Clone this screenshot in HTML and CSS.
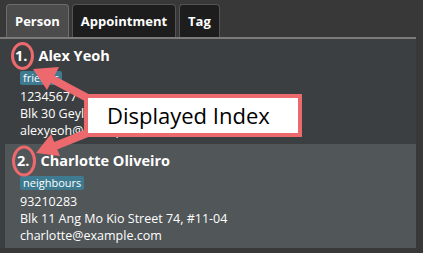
FILE: index.html
```html
<!DOCTYPE html>
<html lang="en">
<head>
    <meta charset="UTF-8">
    <meta name="viewport" content="width=device-width, initial-scale=1.0">
    <title>Person List - Displayed Index</title>
    <link rel="stylesheet" href="styles.css">
</head>
<body>
    <!-- Tab bar -->
    <div class="tabs">
        <div class="tab selected">Person</div>
        <div class="tab">Appointment</div>
        <div class="tab">Tag</div>
    </div>
    <div class="tab-line"></div>

    <!-- Person list -->
    <div class="list">
        <div class="card">
            <div class="name-row"><span class="index">1.</span><span class="name">Alex Yeoh</span></div>
            <div class="tags"><span class="tag">friends</span></div>
            <div class="detail">12345677</div>
            <div class="detail">Blk 30 Geylang Street 29, #06-40</div>
            <div class="detail">alexyeoh@example.com</div>
        </div>
        <div class="card alt">
            <div class="name-row"><span class="index">2.</span><span class="name">Charlotte Oliveiro</span></div>
            <div class="tags"><span class="tag">neighbours</span></div>
            <div class="detail">93210283</div>
            <div class="detail">Blk 11 Ang Mo Kio Street 74, #11-04</div>
            <div class="detail">charlotte@example.com</div>
        </div>
    </div>

    <!-- Annotation overlay -->
    <svg class="marks" width="423" height="253" viewBox="0 0 423 253">
        <ellipse cx="22.5" cy="56" rx="10" ry="12.5" />
        <ellipse cx="24" cy="161" rx="10.5" ry="14" />
        <line x1="95" y1="102" x2="52" y2="79" />
        <polygon points="33,69 59,67 47,90" />
        <line x1="95" y1="130" x2="55" y2="146" />
        <polygon points="36,153 51,134 60,156" />
    </svg>
    <div class="callout">Displayed Index</div>
</body>
</html>
```
FILE: styles.css
```css
body {
    margin: 0;
    width: 423px;
    height: 253px;
    overflow: hidden;
    background-color: #383838;
    font-family: "Open Sans", "Noto Sans", sans-serif;
    color: #fff;
    position: relative;
}

.tabs {
    display: flex;
    gap: 3px;
    padding: 4px 0 0 6px;
    height: 37px;
    box-sizing: border-box;
}

.tab {
    height: 33px;
    box-sizing: border-box;
    padding: 5px 8px 0 8px;
    font-size: 13px;
    font-weight: 700;
    line-height: 22px;
    background-color: #1d1d1d;
    border: 1px solid #545454;
    border-bottom: none;
    border-radius: 4px 4px 0 0;
}

.tab.selected {
    background-color: #4c4c4c;
    border-color: #6c6c6c;
}

.tab-line {
    width: 416px;
    height: 2px;
    background-color: #7b7b7b;
}

.list {
    width: 416px;
    height: 209px;
    background-color: #3c3f41;
}

.card {
    height: 105px;
    box-sizing: border-box;
    margin-left: 5px;
    padding: 7px 0 0 15px;
}

.card.alt {
    height: 104px;
    background-color: #515658;
}

.name-row {
    margin-left: -5px;
    font-size: 14.5px;
    font-weight: 700;
    line-height: 20px;
}

.alt .name-row {
    margin-left: -3px;
}

.index {
    margin-right: 11px;
}

.tags {
    margin-top: 5px;
    height: 14px;
    display: flex;
}

.tag {
    background-color: #3e7b91;
    font-size: 11px;
    line-height: 14px;
    padding: 0 3px;
    border-radius: 2px;
}

.tags + .detail {
    margin-top: 3px;
}

.detail {
    font-size: 12.5px;
    line-height: 17px;
}

.marks {
    position: absolute;
    left: 0;
    top: 0;
}

.marks ellipse {
    fill: none;
    stroke: #ec6a6e;
    stroke-width: 3;
}

.marks line {
    stroke: #ec6a6e;
    stroke-width: 8;
}

.marks polygon {
    fill: #ec6a6e;
}

.callout {
    position: absolute;
    left: 84px;
    top: 94px;
    width: 191px;
    height: 35px;
    border: 4px solid #ec6a6e;
    background-color: #fff;
    color: #000;
    font-size: 22px;
    line-height: 35px;
    padding-left: 19px;
    box-sizing: content-box;
}
```
